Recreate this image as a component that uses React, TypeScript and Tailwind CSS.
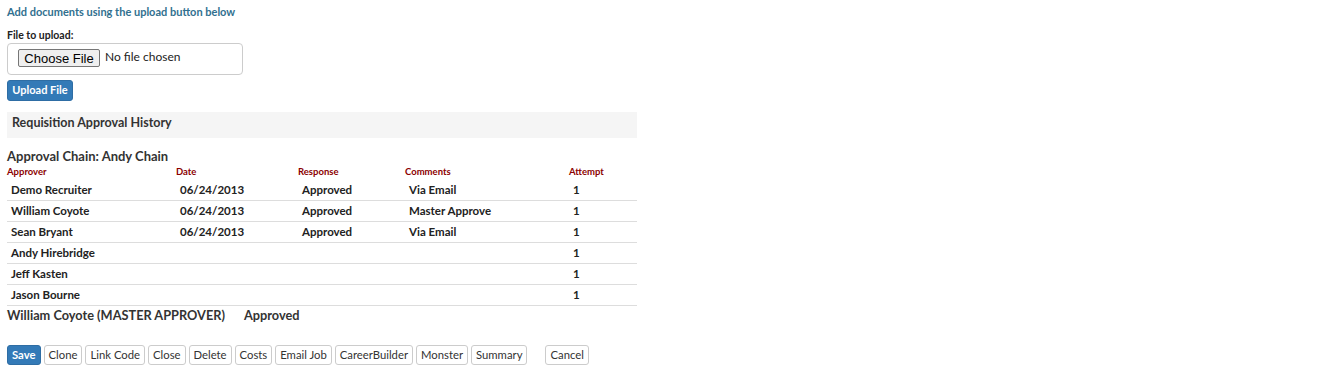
import React from "react";

const rows = [
  { name: "Demo Recruiter", date: "06/24/2013", resp: "Approved", comm: "Via Email", att: "1" },
  { name: "William Coyote", date: "06/24/2013", resp: "Approved", comm: "Master Approve", att: "1" },
  { name: "Sean Bryant", date: "06/24/2013", resp: "Approved", comm: "Via Email", att: "1" },
  { name: "Andy Hirebridge", date: "", resp: "", comm: "", att: "1" },
  { name: "Jeff Kasten", date: "", resp: "", comm: "", att: "1" },
  { name: "Jason Bourne", date: "", resp: "", comm: "", att: "1" },
];

const btns = ["Clone", "Link Code", "Close", "Delete", "Costs", "Email Job", "CareerBuilder", "Monster", "Summary"];

export default function App() {
  return (
    <div className="w-[1331px] h-[368px] bg-white text-[#333] font-['Lato','Open_Sans',sans-serif] pl-[7px] pt-[5px]">
      <div className="text-[11px] font-bold text-[#31708f] h-[14px] leading-[14px]">
        Add documents using the upload button below
      </div>
      <div className="mt-[10px] text-[10.5px] font-bold text-[#222] leading-[12px]">File to upload:</div>
      <div className="mt-[2px] w-[236px] h-[32px] border border-[#ccc] rounded-[4px] flex items-center pl-[10px] pb-[2px]">
        <span className="h-[18px] w-[82px] flex items-center justify-center border border-[#767676] rounded-[2px] bg-[#efefef] text-[13px] text-black font-['Liberation_Sans',Arial,sans-serif] leading-none">
          Choose File
        </span>
        <span className="ml-[5px] text-[12px] text-[#222] leading-none mb-[2px]">No file chosen</span>
      </div>
      <div className="mt-[5px] h-[21px] w-[66px] rounded-[3px] bg-[#337ab7] border border-[#2e6da4] text-white text-[11px] font-bold flex items-center justify-center">
        Upload File
      </div>
      <div className="mt-[11px] w-[630px] h-[26px] bg-[#f5f5f5] pl-[5px] pt-[3px] text-[12.5px] leading-[15px] font-bold text-[#333]">
        Requisition Approval History
      </div>
      <div className="mt-[10px] text-[13px] font-bold text-[#333] leading-[16px]">Approval Chain: Andy Chain</div>
      <div className="w-[630px]">
        <div className="flex text-[9.5px] font-bold text-[#8b0000] mt-[2px] h-[14px] leading-[12px]">
          <div className="w-[169px]">Approver</div>
          <div className="w-[122px]">Date</div>
          <div className="w-[107px]">Response</div>
          <div className="w-[164px]">Comments</div>
          <div>Attempt</div>
        </div>
        {rows.map((r) => (
          <div key={r.name} className="flex h-[21px] items-center border-b border-[#ddd] text-[11.5px] font-bold text-[#222]">
            <div className="w-[169px] pl-[4px]">{r.name}</div>
            <div className="w-[122px] pl-[4px]">{r.date}</div>
            <div className="w-[107px] pl-[4px]">{r.resp}</div>
            <div className="w-[164px] pl-[4px]">{r.comm}</div>
            <div className="pl-[4px]">{r.att}</div>
          </div>
        ))}
      </div>
      <div className="flex text-[12.75px] font-bold text-[#333] leading-[18px]">
        <span>William Coyote (MASTER APPROVER)</span>
        <span className="ml-[19px]">Approved</span>
      </div>
      <div className="flex mt-[21px] gap-[3px] text-[11.3px] leading-none">
        <div className="h-[20px] px-[4px] rounded-[3px] bg-[#337ab7] border border-[#2e6da4] text-white font-bold flex items-center">Save</div>
        {btns.map((b) => (
          <div key={b} className="h-[20px] px-[4px] rounded-[3px] bg-white border border-[#ccc] text-[#333] flex items-center">{b}</div>
        ))}
        <div className="ml-[15px] h-[20px] px-[4px] rounded-[3px] bg-white border border-[#ccc] text-[#333] flex items-center">Cancel</div>
      </div>
    </div>
  );
}
